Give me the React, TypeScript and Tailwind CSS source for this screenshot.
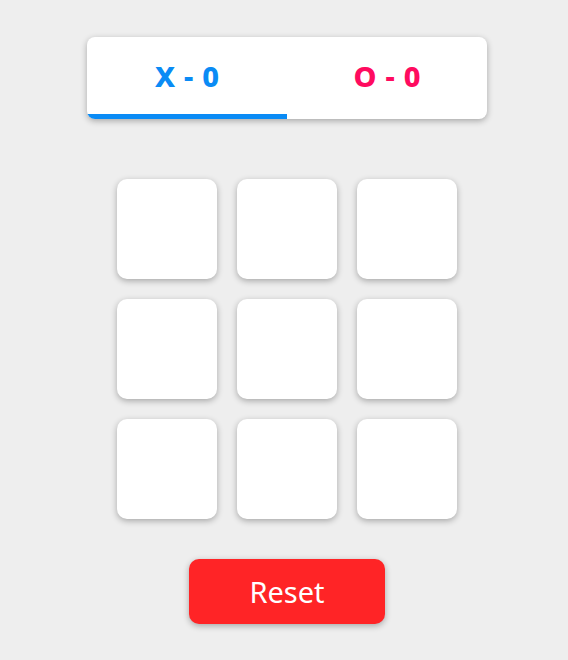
export default function App() {
  const cells = Array.from({ length: 9 }, (_, i) => i);

  return (
    <div
      className="flex min-h-[660px] w-full flex-col items-center bg-[#eeeeee] pl-[6px] pt-[37px]"
      style={{ fontFamily: '"Noto Sans", sans-serif' }}
    >
      <div className="flex h-[82px] w-[400px] overflow-hidden rounded-lg bg-white shadow-[0_2px_6px_rgba(0,0,0,0.3)]">
        <div className="flex flex-1 items-center justify-center gap-[9px] border-b-[5px] border-[#0a8bf5] text-[29px] font-extrabold text-[#0a8bf5]">
          <span>X</span>
          <span>-</span>
          <span>0</span>
        </div>
        <div className="flex flex-1 items-center justify-center gap-[9px] border-b-[5px] border-transparent text-[29px] font-extrabold text-[#ff0b5f]">
          <span>O</span>
          <span>-</span>
          <span>0</span>
        </div>
      </div>

      <div className="mt-[60px] grid grid-cols-3 gap-5">
        {cells.map((i) => (
          <div
            key={i}
            className="h-[100px] w-[100px] rounded-[10px] bg-white shadow-[0_2px_6px_rgba(0,0,0,0.3)]"
          />
        ))}
      </div>

      <button className="mt-10 h-[65px] w-[196px] rounded-[10px] bg-[#ff2426] text-[29px] text-white shadow-[0_2px_6px_rgba(0,0,0,0.3)]">
        Reset
      </button>
    </div>
  );
}
